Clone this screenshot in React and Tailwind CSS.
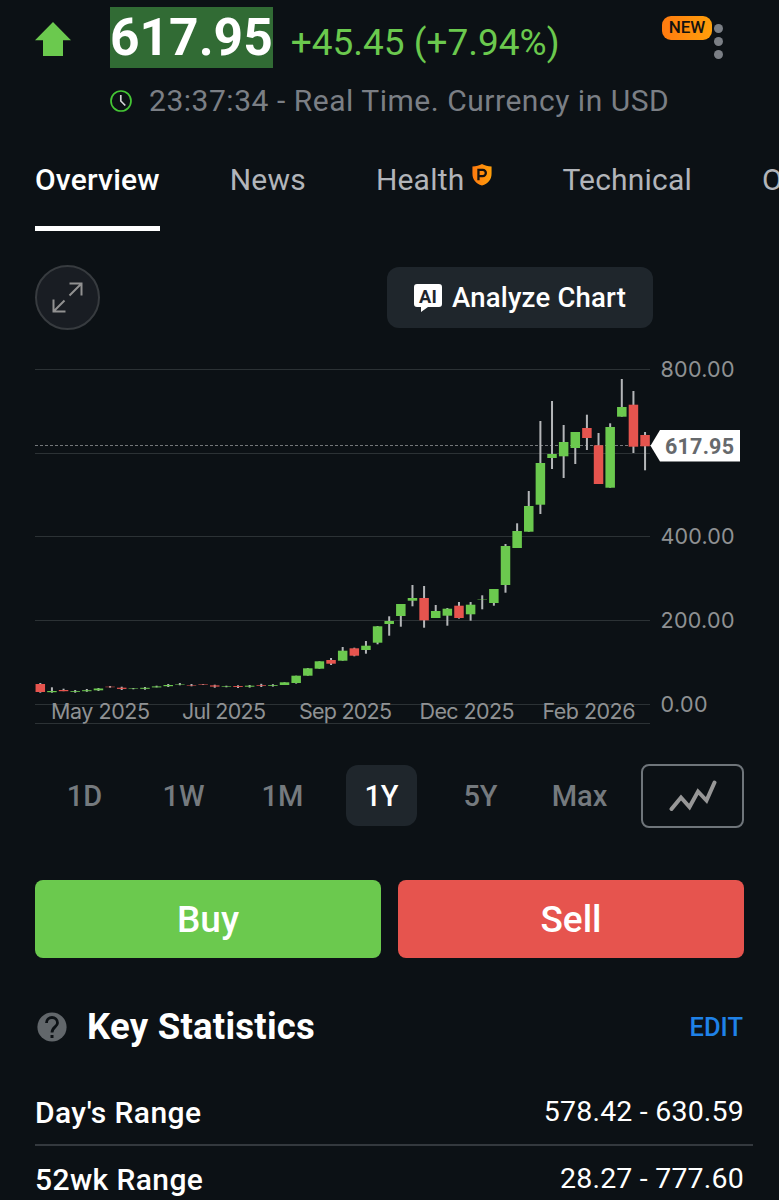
import { useState } from 'react'
import clsx from 'clsx'

const TABS = ['Overview', 'News', 'Health', 'Technical', 'Opinions']
const RANGES = ['1D', '1W', '1M', '1Y', '5Y', 'Max']

const STATS = [
  { label: "Day's Range", value: '578.42 - 630.59' },
  { label: '52wk Range', value: '28.27 - 777.60' },
]

const GRID_LINES = [369.5, 453.5, 536.5, 620.5, 704.5, 723.5]
const Y_LABELS = [
  { text: '800.00', y: 377 },
  { text: '400.00', y: 544 },
  { text: '200.00', y: 628 },
  { text: '0.00', y: 711.5 },
]
const X_LABELS = [
  { text: 'May 2025', x: 51, width: 99 },
  { text: 'Jul 2025', x: 182, width: 84 },
  { text: 'Sep 2025', x: 299, width: 93 },
  { text: 'Dec 2025', x: 419.5, width: 95 },
  { text: 'Feb 2026', x: 542.5, width: 93 },
]

// [up, body top, body bottom, wick top, wick bottom]
const CANDLES = [
  [0, 684, 692, 683, 692.7],
  [1, 691, 692.2, 687.3, 692.7],
  [0, 690, 691.2, 688.7, 691.2],
  [1, 691, 691.8, 690, 692.7],
  [1, 690.2, 691.2, 689, 691.8],
  [1, 688.5, 690.3, 688, 691],
  [0, 686.7, 687.2, 686, 687.7],
  [0, 687.7, 688.9, 686.7, 690],
  [1, 688.4, 688.9, 688, 689.3],
  [1, 687.8, 688.8, 687, 689.7],
  [1, 686.4, 687.4, 685.7, 687.4],
  [1, 685, 686.2, 684, 687],
  [1, 684.3, 684.8, 683, 685.3],
  [0, 685.1, 685.6, 684, 686.3],
  [0, 684.4, 684.9, 684.2, 685],
  [0, 685.4, 686.6, 684.7, 687.7],
  [1, 686.2, 686.8, 685.7, 687.3],
  [0, 686, 686.9, 685.3, 688],
  [1, 685.7, 686.7, 685, 687.6],
  [0, 685.2, 685.9, 683.8, 687],
  [1, 685.1, 685.9, 684.2, 686.6],
  [1, 682.3, 685, 682.3, 685],
  [1, 675.7, 683, 675.7, 683.6],
  [1, 668.3, 675.7, 668, 675.7],
  [1, 661.3, 668.7, 661.3, 668.7],
  [0, 660, 663.7, 658, 665],
  [1, 650.7, 660.7, 647, 660.7],
  [0, 648.3, 655.7, 647.7, 656.3],
  [1, 645.7, 650, 641, 653.7],
  [1, 626.3, 642.7, 626, 644.3],
  [1, 621, 624, 616.3, 635.7],
  [1, 604, 616, 604, 626.7],
  [1, 598, 600.7, 585, 606.3],
  [0, 598, 620.3, 586, 627.7],
  [1, 611, 618, 605, 618],
  [1, 608.7, 615.7, 608, 625.7],
  [0, 605.7, 618, 602, 618.6],
  [1, 604.7, 614.3, 602, 620.7],
  [1, 599.2, 599.6, 595.3, 609.3],
  [1, 589, 603, 589, 605.7],
  [1, 546, 585, 544, 592.7],
  [1, 531, 548, 523.3, 548],
  [1, 506, 531.7, 491, 531.7],
  [1, 463, 504.7, 421, 514],
  [1, 454, 458, 401, 469],
  [1, 442, 456.3, 425, 478],
  [1, 432, 448, 432, 464],
  [0, 428, 438, 414.7, 450],
  [0, 445.3, 484, 433, 484],
  [1, 427, 487.7, 423.3, 487.7],
  [1, 407, 416.7, 379, 416.7],
  [0, 404.7, 446.7, 391, 453],
  [0, 435, 446.3, 432, 470.3],
]

const STEP = 11.63

function ProBadge() {
  return (
    <svg className="w-5 h-[22px] mb-2" viewBox="0 0 20 23">
      <defs>
        <linearGradient id="pro" x1="0" y1="0" x2="1" y2="0">
          <stop offset="0" stopColor="#ff7a0f" />
          <stop offset="1" stopColor="#ff9f0a" />
        </linearGradient>
      </defs>
      <path d="M0 2.6C4 2.4 7 1.6 10 0C13 1.6 16 2.4 20 2.6V10C20 16.5 16.5 20.5 10 22.5C3.5 20.5 0 16.5 0 10Z" fill="url(#pro)" />
      <path d="M6.3 17V6.2H10.8A3.2 3.2 0 0 1 10.8 12.6H6.5" fill="none" stroke="#141210" strokeWidth="2.4" />
    </svg>
  )
}

function AiIcon() {
  return (
    <svg className="w-7 h-7" viewBox="0 0 28 28">
      <path d="M3 0H25A3 3 0 0 1 28 3V20A3 3 0 0 1 25 23H14L7 28V23H3A3 3 0 0 1 0 20V3A3 3 0 0 1 3 0Z" fill="#fff" />
      <text x="5" y="18.5" fontSize="19" fontWeight="700" fill="#1f262c" textLength="18" lengthAdjust="spacingAndGlyphs">AI</text>
    </svg>
  )
}

function PriceChart() {
  return (
    <svg className="block w-[779px] h-[400px]" viewBox="0 340 779 400">
      {GRID_LINES.map(y => (
        <line key={y} x1="35" x2="650" y1={y} y2={y} stroke="#2c3235" />
      ))}
      <line x1="35" x2="651" y1="445.5" y2="445.5" stroke="#74777a" strokeDasharray="3 2" />
      {CANDLES.map(([up, top, bottom, high, low], i) => {
        const x = 40.3 + i * STEP
        return (
          <g key={i}>
            <rect x={x - 1} y={high} width="2" height={low - high} fill="#b4b6b8" />
            <rect x={x - 4.75} y={top} width="9.5" height={bottom - top} fill={up ? '#6bc94e' : '#e6544e'} />
          </g>
        )
      })}
      <g fill="#8f9193" fontSize="21.5" fontFamily="Inter, sans-serif">
        {Y_LABELS.map(({ text, y }) => (
          <text key={text} x="660.5" y={y} textLength={text === '0.00' ? 47 : 74}>{text}</text>
        ))}
        {X_LABELS.map(({ text, x, width }) => (
          <text key={text} x={x} y="718.5" textLength={width}>{text}</text>
        ))}
      </g>
      <path d="M650.5 445.7L660 430H740V461.5H660Z" fill="#fff" />
      <text x="665" y="453.5" fontSize="21.5" fontWeight="700" fill="#66696c" textLength="69">617.95</text>
    </svg>
  )
}

export default function App() {
  const [tab, setTab] = useState('Overview')
  const [range, setRange] = useState('1Y')

  return (
    <div className="w-[779px] h-[1200px] overflow-hidden bg-[#0c1115] text-white font-['Roboto',sans-serif]">
      <header className="flex h-[130px] pt-[7px] pl-[35px]">
        <svg className="w-9 h-[34px] mt-[15px] mr-[39px]" viewBox="0 0 36 34">
          <path d="M18 0L36 18.3H28V34H8V18.3H0Z" fill="#6bc94e" />
        </svg>
        <div>
          <div className="flex items-baseline gap-[18px] h-[61px]">
            <span className="bg-[#316b34] font-bold text-[51.5px] leading-[61px]">617.95</span>
            <span className="text-[37px] text-[#6bc94e]">+45.45 (+7.94%)</span>
          </div>
          <div className="flex items-center gap-[17px] mt-[15px] text-[#7b7f85]">
            <svg className="w-[22px] h-[22px]" viewBox="0 0 22 22" fill="none" strokeWidth="1.7">
              <circle cx="11" cy="11" r="10" stroke="#45c735" />
              <path d="M10.8 5V11L15.3 15.5" stroke="#d5d5d8" />
            </svg>
            <span className="text-[30px] leading-[35px] tracking-[0.53px]">23:37:34 - Real Time. Currency in USD</span>
          </div>
        </div>
        <div className="flex absolute left-[662px] top-4">
          <span className="flex items-center justify-center w-[50px] h-6 rounded-[9px] bg-linear-to-r from-[#ff7a0f] to-[#ff9f0a] text-[#141210] text-[17px] font-medium">NEW</span>
          <div className="flex flex-col gap-1 mt-2 ml-0.5">
            {[0, 1, 2].map(i => (
              <span key={i} className="size-[9px] rounded-full bg-[#7b7f85]" />
            ))}
          </div>
        </div>
      </header>

      <nav className="flex gap-[70px] h-[101px] pl-[35px] text-[30px] tracking-[0.2px]">
        {TABS.map(name => (
          <button
            key={name}
            onClick={() => setTab(name)}
            className={clsx(
              'flex shrink-0 items-center gap-2 pt-0.5 border-b-[5px]',
              tab === name ? 'border-white font-medium' : 'border-transparent text-[#b2b5ba]'
            )}
          >
            {name}
            {name === 'Health' && <ProBadge />}
          </button>
        ))}
      </nav>

      <div className="flex items-center justify-between h-[109px] pt-[34px] pb-[10px] pl-[35px] pr-[126px]">
        <button className="flex items-center justify-center size-[65px] rounded-full border-2 border-[#373b3f] bg-[#191d23]">
          <svg className="w-[31px] h-[31px]" viewBox="0 0 31 31" fill="none" stroke="#919191" strokeWidth="2">
            <path d="M17.5 1.5H29.5V13.5M29.5 1.5L17.5 13.5M1.5 17.5V29.5H13.5M1.5 29.5L12.5 18.5" />
          </svg>
        </button>
        <button className="flex items-center justify-center gap-[10px] w-[266px] h-[61px] rounded-xl bg-[#1f262c] text-[27.5px] font-medium tracking-[0.2px]">
          <AiIcon />
          Analyze Chart
        </button>
      </div>

      <PriceChart />

      <div className="flex items-center gap-3 h-[111px] pl-[35px] text-[29px] font-medium">
        <div className="grid grid-cols-6 w-[594px] justify-items-center">
          {RANGES.map(r => (
            <button
              key={r}
              onClick={() => setRange(r)}
              className={clsx('w-[71px] h-[61px] pt-0.5 rounded-xl', range === r ? 'bg-[#1f262c]' : 'text-[#757a7e]')}
            >
              {r}
            </button>
          ))}
        </div>
        <button className="flex items-center justify-center w-[103px] h-16 rounded-lg border-2 border-[#6f757a]">
          <svg className="w-12 h-8" viewBox="0 0 48 32" fill="none" stroke="#979797" strokeWidth="4" strokeLinecap="round">
            <path d="M2.5 29L12 17.5L20.5 27L29 11.5L37.5 20.5L45.5 2.5" />
          </svg>
        </button>
      </div>

      <div className="grid grid-cols-2 gap-[17px] mt-[29px] px-[35px] text-[37px] font-medium">
        <button className="h-[78px] pt-px rounded-lg bg-[#6bc94e]">Buy</button>
        <button className="h-[78px] pt-px rounded-lg bg-[#e6544e]">Sell</button>
      </div>

      <section className="pt-[44px]">
        <div className="flex items-center h-[50px] pl-[37px] pr-9">
          <svg className="w-[30px] h-[30px] mr-5" viewBox="0 0 30 30">
            <circle cx="15" cy="15" r="14.6" fill="#62676b" />
            <path d="M9.5 11A5.5 5.5 0 0 1 20.5 11C20.5 15 15 15 15 20.5" fill="none" stroke="#0c1115" strokeWidth="2.8" />
            <rect x="13.5" y="23" width="3" height="3" fill="#0c1115" />
          </svg>
          <h2 className="grow text-[36.5px] font-bold tracking-[0.25px]">Key Statistics</h2>
          <button className="text-[25.5px] font-medium text-[#1f82e8]">EDIT</button>
        </div>
        <div className="pl-[35px] pr-[26px] pt-[27px]">
          {STATS.map(({ label, value }) => (
            <div key={label} className="flex items-center justify-between h-[67px] pt-0.5 pr-[9px] border-b-2 border-[#34393e]">
              <span className="text-[30px] font-medium tracking-[0.4px]">{label}</span>
              <span className="text-[28.5px] tracking-[0.2px]">{value}</span>
            </div>
          ))}
        </div>
      </section>
    </div>
  )
}
